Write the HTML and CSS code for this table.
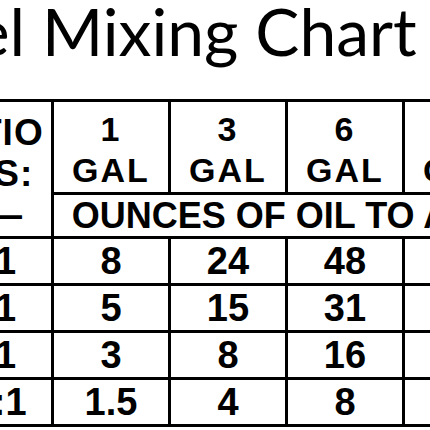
FILE: index.html
```html
<!DOCTYPE html>
<html lang="en">
	<head>
		<meta charset="UTF-8">
		<title>Fuel Mixing Chart</title>
		<link rel="stylesheet" href="styles.css">
	</head>
	<body>
		<div class="sheet">
			<h1 class="title">Fuel Mixing Chart</h1>
			<table class="chart">
				<colgroup>
					<col class="col-ratio">
					<col class="col-gal">
					<col class="col-gal">
					<col class="col-gal">
					<col class="col-gal">
				</colgroup>
				<thead>
					<tr class="gal-row">
						<th class="ratio-head" rowspan="2">RATIO<br>GAS:<br>——</th>
						<th>1<br>GAL</th>
						<th>3<br>GAL</th>
						<th>6<br>GAL</th>
						<th>10<br>GAL</th>
					</tr>
					<tr class="ounces-row">
						<th colspan="4" class="ounces">OUNCES OF OIL TO ADD</th>
					</tr>
				</thead>
				<tbody>
					<tr>
						<td class="ratio">16:1</td>
						<td>8</td>
						<td>24</td>
						<td>48</td>
						<td>80</td>
					</tr>
					<tr>
						<td class="ratio">25:1</td>
						<td>5</td>
						<td>15</td>
						<td>31</td>
						<td>51</td>
					</tr>
					<tr>
						<td class="ratio">50:1</td>
						<td>3</td>
						<td>8</td>
						<td>16</td>
						<td>26</td>
					</tr>
					<tr>
						<td class="ratio">100:1</td>
						<td>1.5</td>
						<td>4</td>
						<td>8</td>
						<td>13</td>
					</tr>
				</tbody>
			</table>
		</div>
	</body>
</html>
```

FILE: styles.css
```css
*, *::before, *::after {
	box-sizing: border-box;
}

html, body {
	margin: 0;
	padding: 0;
	height: 100%;
}

body {
	background: #fff;
	color: #000;
	overflow: hidden;
	font-family: "Liberation Sans", Arial, sans-serif;
}

.sheet {
	margin-left: -98px;
	width: 700px;
}

.title {
	margin: 0;
	height: 99px;
	padding: 0 0 0 1px;
	font-family: Lato, "Open Sans", sans-serif;
	font-weight: 400;
	font-size: 66px;
	line-height: 62px;
	white-space: nowrap;
}

.chart {
	border-collapse: collapse;
	table-layout: fixed;
	width: 617px;
	font-weight: bold;
}

.col-ratio {
	width: 149px;
}

.col-gal {
	width: 117px;
}

.chart th,
.chart td {
	border: 3px solid #000;
	padding: 0;
	text-align: center;
	white-space: nowrap;
}

.gal-row > th {
	height: 93px;
	font-size: 34px;
	line-height: 41px;
	letter-spacing: 2px;
	padding-top: 6px;
}

.gal-row > .ratio-head {
	font-size: 37px;
	line-height: 41px;
	letter-spacing: 1px;
	padding: 9px 0 0 14px;
}

.ounces-row > th {
	height: 44px;
}

.ounces {
	font-size: 36px;
	line-height: 40px;
	text-align: left;
	padding-left: 9px;
}

.chart td {
	height: 47px;
	font-size: 38px;
	line-height: 44px;
}
```
